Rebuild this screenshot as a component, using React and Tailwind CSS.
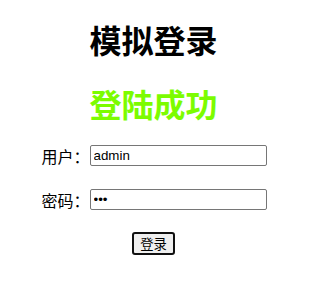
import React, { useState } from 'react';

const cjk = { fontFamily: '"Microsoft YaHei", "Noto Sans CJK SC", sans-serif' };

export default function App() {
  const [user, setUser] = useState('admin');
  const [pwd, setPwd] = useState('123');

  return (
    <div className="w-[307px] flex flex-col items-center bg-white text-black" style={cjk}>
      {/* Titles */}
      <h1 className="mt-[21px] text-[32px] leading-[37px] font-bold">模拟登录</h1>
      <h2 className="mt-[27px] text-[32px] leading-[37px] font-bold text-[#7cfc00]">登陆成功</h2>

      {/* Form */}
      <div className="mt-[23px] flex flex-col gap-[23px]">
        <div className="flex items-center">
          <label className="w-[49px] text-base leading-5 text-right">用户：</label>
          <input
            value={user}
            onChange={e => setUser(e.target.value)}
            className="w-[177px] h-[21px] px-[3px] border border-[#767676] rounded-[2px] text-[13.33px] outline-none"
            style={{ fontFamily: '"Liberation Sans", Arial, sans-serif' }}
          />
        </div>
        <div className="flex items-center">
          <label className="w-[49px] text-base leading-5 text-right">密码：</label>
          <input
            type="password"
            value={pwd}
            onChange={e => setPwd(e.target.value)}
            className="w-[177px] h-[21px] px-[3px] border border-[#767676] rounded-[2px] text-[13.33px] outline-none"
            style={{ fontFamily: '"Liberation Sans", Arial, sans-serif' }}
          />
        </div>
      </div>

      <button className="mt-[22px] h-[23px] px-[6px] border-2 border-[#101010] rounded-[3px] bg-[#efefef] text-[13.33px] leading-4">
        登录
      </button>
    </div>
  );
}
